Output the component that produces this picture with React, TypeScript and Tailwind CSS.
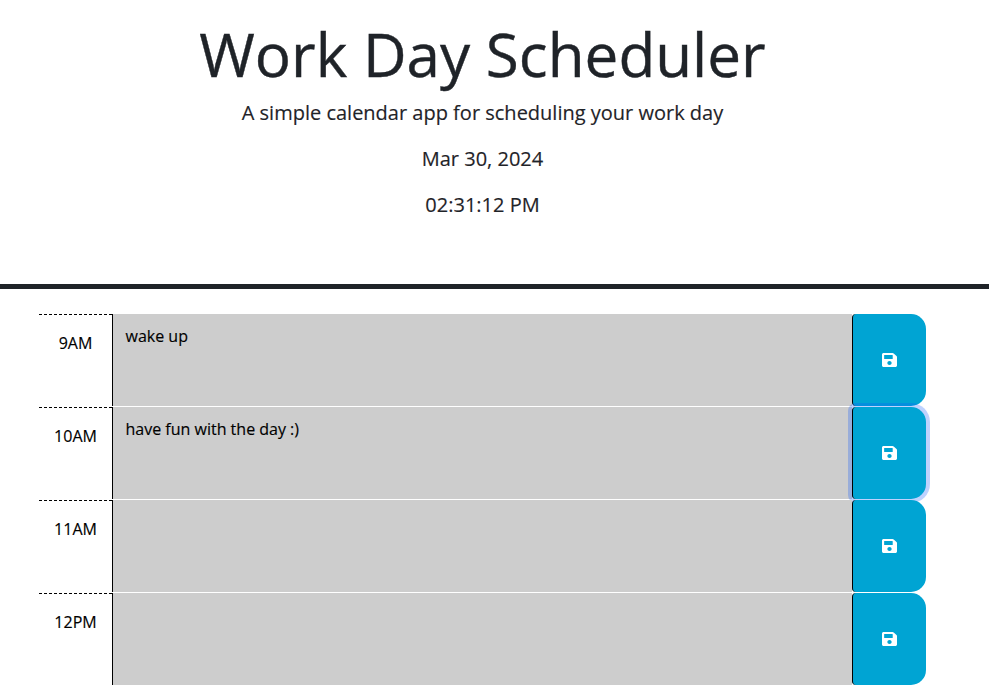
import React from "react";

const rows = [
  { hour: "9AM", text: "wake up", focus: false },
  { hour: "10AM", text: "have fun with the day :)", focus: true },
  { hour: "11AM", text: "", focus: false },
  { hour: "12PM", text: "", focus: false },
];

function SaveIcon() {
  return (
    <svg viewBox="0 0 448 512" className="h-4 w-[15px]" preserveAspectRatio="none" fill="#fff">
      <path d="M433.941 129.941l-83.882-83.882A48 48 0 0 0 316.118 32H48C21.49 32 0 53.49 0 80v352c0 26.51 21.49 48 48 48h352c26.51 0 48-21.49 48-48V163.882a48 48 0 0 0-14.059-33.941zM224 416c-35.346 0-64-28.654-64-64 0-35.346 28.654-64 64-64s64 28.654 64 64c0 35.346-28.654 64-64 64zm96-304.52V212c0 6.627-5.373 12-12 12H76c-6.627 0-12-5.373-12-12V108c0-6.627 5.373-12 12-12h228.52c3.183 0 6.235 1.264 8.485 3.515l3.48 3.48A11.996 11.996 0 0 1 320 111.48z" />
    </svg>
  );
}

export default function App() {
  return (
    <div className="h-[686px] w-full overflow-hidden bg-white font-['Open_Sans',sans-serif] text-[#1f2328] [-webkit-text-stroke:0.15px]">
      <header className="h-[289px] border-b-[5px] border-[#1f2328] pr-6 pt-6 text-center">
        <h1 className="mb-2 h-[66px] text-[60.2px] leading-[60px] [-webkit-text-stroke:0.4px]">Work Day Scheduler</h1>
        <p className="mb-4 text-[20px] leading-[30px]">A simple calendar app for scheduling your work day</p>
        <p className="mb-4 text-[20px] leading-[30px]">Mar 30, 2024</p>
        <p className="text-[20px] leading-[30px]">02:31:12 PM</p>
      </header>
      <main className="ml-[39px] mt-[25px] w-[887px] text-[16px] leading-6 text-black">
        {rows.map((r) => (
          <div key={r.hour} className="flex h-[93px] border-b border-white">
            <div className="w-[73px] border-t border-dashed border-black pt-4 text-center">{r.hour}</div>
            <div className="w-[740px] border-l border-black bg-[#cdcdcd] pl-[12.5px] pt-[10px]">{r.text}</div>
            <button
              className={
                "flex w-[74px] items-center justify-center rounded-l-[4px] rounded-r-[15px] border-l border-black bg-[#00a4d3] " +
                (r.focus ? "shadow-[0_0_0_4px_rgba(13,90,253,0.27)]" : "")
              }
            >
              <SaveIcon />
            </button>
          </div>
        ))}
      </main>
    </div>
  );
}
